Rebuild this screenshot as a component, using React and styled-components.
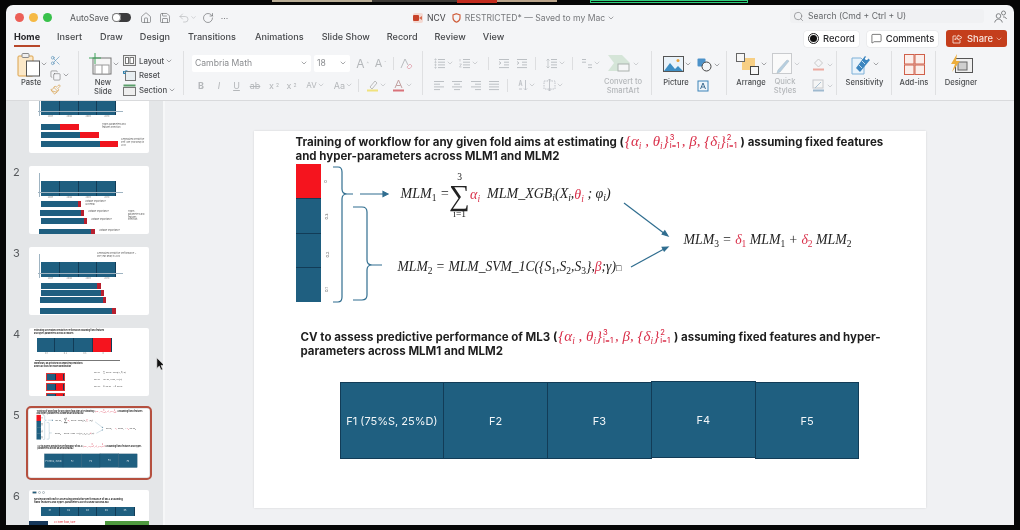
import React from 'react'
import styled, { createGlobalStyle } from 'styled-components'
import { ChevronDown, Copy, House, MessageSquare, Paintbrush, RotateCw, Save, Scissors, Search, Undo2 } from 'lucide-react'

const UI = `Inter, Roboto, "Liberation Sans", sans-serif`
const MATH = `"Liberation Serif", "DejaVu Serif", serif`
const BLUE = '#1f5f80'
const EDGE = '#123c57'
const RED = '#d9304a'
const MUTED = '#b4b7ba'
const TEXT = '#3c3c3e'

const GlobalStyle = createGlobalStyle`
  html, body { margin: 0; height: 100%; background: #050505; }
  #root { height: 530px; overflow: hidden; }
`

const Screen = styled.div`
  width: 1020px;
  height: 530px;
  background: #060606;
  font-family: ${UI};
  color: ${TEXT};
  filter: blur(0.45px);
`
const TopStrip = styled.div`
  height: 5px;
  display: flex;
  padding-left: 272px;
`
const StripPiece = styled.div`
  width: ${p => p.$w}px;
  height: ${p => p.$h || 2}px;
  margin-right: ${p => p.$gap || 0}px;
  background: ${p => p.$bg};
  border: ${p => p.$line || 'none'};
  box-sizing: border-box;
`
const Window = styled.div`
  margin: 0 6px;
  height: 520px;
  border-radius: 7px 7px 0 0;
  background: #f4f5f7;
  display: flex;
  flex-direction: column;
  overflow: hidden;
`

/* title bar */
const TitleBar = styled.div`
  height: 25px;
  flex: none;
  display: flex;
  align-items: center;
  font-size: 8.6px;
  color: #55575a;
  position: relative;
`
const Lights = styled.div`
  display: flex;
  gap: 5px;
  margin-left: 9px;
  width: 55px;
`
const Light = styled.span`
  width: 9px;
  height: 9px;
  border-radius: 50%;
  background: ${p => p.$c};
`
const Toggle = styled.span`
  width: 19px;
  height: 9px;
  margin: 0 9px 0 3px;
  border-radius: 5px;
  background: #3b3b3d;
  position: relative;
  &::after {
    content: '';
    position: absolute;
    left: 0;
    top: 0;
    width: 9px;
    height: 9px;
    border-radius: 50%;
    background: #fff;
    box-shadow: inset 0 0 0 1px #777;
  }
`
const QuickIcons = styled.div`
  display: flex;
  align-items: center;
  gap: 7px;
  color: #6a6c70;
`
const QuickPair = styled.span`
  display: flex;
  align-items: center;
  gap: 2px;
`
const DocTitle = styled.div`
  position: absolute;
  left: 407px;
  top: 0;
  height: 25px;
  display: flex;
  align-items: center;
  gap: 4px;
  font-size: 8.6px;
  color: #77797c;
`
const DocName = styled.span`
  color: #3f3f42;
  margin: 0 2px 0 0;
`
const SearchBox = styled.div`
  position: absolute;
  left: 784px;
  top: 4px;
  width: 194px;
  height: 14px;
  display: flex;
  align-items: center;
  gap: 4px;
  padding-left: 3px;
  box-sizing: border-box;
  font-size: 8.6px;
  background: #f0f1f3;
  border-radius: 3px;
  color: #66686b;
`
const People = styled.div`
  position: absolute;
  left: 988px;
  top: 5px;
`

/* tabs */
const TabBar = styled.div`
  height: 18px;
  flex: none;
  display: flex;
  align-items: flex-start;
  padding-left: 8px;
  position: relative;
`
const Tab = styled.div`
  font-size: 9.1px;
  line-height: 14px;
  height: 15px;
  margin-right: ${p => p.$gap}px;
  white-space: nowrap;
  font-weight: ${p => (p.$active ? 700 : 500)};
  color: ${p => (p.$active ? '#26262a' : '#47494c')};
  border-bottom: ${p => (p.$active ? '2px solid #b7472a' : '2px solid transparent')};
`
const TabActions = styled.div`
  position: absolute;
  right: 7px;
  top: 0;
  display: flex;
  align-items: center;
  gap: 8px;
`
const PillButton = styled.div`
  height: 16px;
  width: ${p => p.$w}px;
  box-sizing: border-box;
  display: flex;
  align-items: center;
  justify-content: center;
  gap: 4px;
  font-size: 9.4px;
  font-weight: 500;
  color: #29292c;
  background: #fff;
  border-radius: 3px;
  box-shadow: 0 0 0 0.5px #e2e3e5;
`
const ShareButton = styled(PillButton)`
  height: 17px;
  background: #c43e1c;
  color: #f8e4dd;
  box-shadow: none;
`
const RecordDot = styled.span`
  width: 11px;
  height: 11px;
  border: 1px solid #222;
  border-radius: 50%;
  box-sizing: border-box;
  display: grid;
  place-items: center;
  &::after {
    content: '';
    width: 7px;
    height: 7px;
    background: #111;
    border-radius: 50%;
  }
`

/* ribbon */
const Ribbon = styled.div`
  height: 53px;
  flex: none;
  display: flex;
  align-items: flex-start;
  border-bottom: 1px solid #d9dadc;
  box-sizing: border-box;
`
const Group = styled.div`
  width: ${p => p.$w}px;
  height: 44px;
  padding-left: ${p => p.$pad || 0}px;
  box-sizing: border-box;
  flex: none;
  display: flex;
  border-right: ${p => (p.$last ? 'none' : '1px solid #dfe0e2')};
  margin-top: 3px;
`
const BigButton = styled.div`
  width: ${p => p.$w}px;
  margin-left: ${p => p.$left || 0}px;
  display: flex;
  flex-direction: column;
  align-items: center;
  flex: none;
`
const BigIcon = styled.div`
  height: 24px;
  margin-top: 1px;
  display: flex;
  align-items: center;
  gap: 2px;
  color: #777;
`
const BigLabel = styled.div`
  font-size: 7.6px;
  line-height: 9px;
  margin-top: 2px;
  text-align: center;
  font-weight: 500;
  white-space: nowrap;
  color: ${p => (p.$off ? MUTED : '#4b4d50')};
`
const StackColumn = styled.div`
  display: flex;
  flex-direction: column;
  justify-content: space-between;
  height: ${p => p.$h || 42}px;
  margin: ${p => p.$top || 3}px 0 0 ${p => p.$left || 0}px;
  flex: none;
`
const StackItem = styled.div`
  display: flex;
  align-items: center;
  gap: 3px;
  font-size: 7.8px;
  font-weight: 500;
  color: #4b4d50;
  height: 13px;
  white-space: nowrap;
`
const Rows = styled.div`
  width: ${p => p.$w}px;
  flex: none;
  display: flex;
  flex-direction: column;
  gap: 6px;
  padding-top: 4px;
`
const Row = styled.div`
  display: flex;
  align-items: center;
  height: 16px;
  color: ${MUTED};
`
const Field = styled.div`
  width: ${p => p.$w}px;
  height: 17px;
  margin-right: 3px;
  padding: 0 5px 0 3px;
  box-sizing: border-box;
  display: flex;
  align-items: center;
  justify-content: space-between;
  background: #fff;
  border-radius: 2px;
  font-size: 8.6px;
  color: #8a8c8f;
`
const Cell = styled.div`
  width: ${p => p.$w}px;
  flex: none;
  display: flex;
  align-items: center;
  justify-content: center;
  gap: 2px;
  font-size: ${p => p.$size || 9}px;
  font-weight: ${p => p.$weight || 400};
  font-style: ${p => (p.$italic ? 'italic' : 'normal')};
  text-decoration: ${p => p.$deco || 'none'};
  color: ${MUTED};
`
const RowRule = styled.span`
  width: 1px;
  height: 13px;
  margin: 0 ${p => p.$r ?? p.$gap ?? 4}px 0 ${p => p.$gap ?? 4}px;
  background: #dddee0;
  flex: none;
`
const Script = styled.span`
  font-size: 5px;
  vertical-align: ${p => p.$dir};
`
const TightChevron = styled(ChevronDown)`
  margin: 0 -2px;
  flex: none;
`

const Chev = ({ c = '#6d6f72', s = 8 }) => <TightChevron size={s} color={c} strokeWidth={1.8} />

const Lines = ({ kind = 'left', w = 12 }) => {
  const rows = {
    left: [[1, 11], [1, 7], [1, 11], [1, 7]],
    center: [[1, 11], [3, 9], [1, 11], [3, 9]],
    right: [[1, 11], [5, 11], [1, 11], [5, 11]],
    justify: [[1, 11], [1, 11], [1, 11], [1, 11]],
    bullets: [[4, 11], [4, 11], [4, 11], [4, 11]],
    numbers: [[4, 11], [4, 11], [4, 11], [4, 11]],
    spacing: [[5, 11], [5, 11], [5, 11], [5, 11]],
    indent: [[1, 11], [6, 11], [6, 11], [1, 11]],
    columns: [[1, 5], [1, 5], [7, 11], [7, 11]],
  }[kind]
  return (
    <svg width={w} height="11" viewBox="0 0 12 11" fill="none" stroke="#bcc0c4" strokeWidth="1">
      {rows.map((r, i) => <line key={i} x1={r[0]} x2={r[1]} y1={1.5 + i * 2.7} y2={1.5 + i * 2.7} />)}
      {kind === 'bullets' && [1.5, 4.2, 6.9, 9.6].map(y => <circle key={y} cx="1.5" cy={y} r=".6" />)}
      {kind === 'numbers' && <path d="M1 1v2.500M.5 6h2L.5 9h2" strokeWidth=".7" />}
      {kind === 'spacing' && <path d="M2 1v9M.5 2.500L2 1l1.500 1.500M.5 8.500L2 10l1.500-1.500" strokeWidth=".8" />}
      {kind === 'indent' && <path d="M1 3.500l2 1.500-2 1.500" />}
    </svg>
  )
}

const TextDirIcon = () => (
  <svg width="10" height="12" viewBox="0 0 10 12" fill="none" stroke="#bcc0c4" strokeWidth=".9">
    <path d="M1 7l1.500-6L4 7M1.500 5h2" />
    <path d="M7.500 1v10M6 9.500L7.500 11 9 9.500" />
    <path d="M1 10h3" />
  </svg>
)
const TextBoxAlignIcon = () => (
  <svg width="13" height="12" viewBox="0 0 13 12" fill="none" stroke="#bcc0c4" strokeWidth=".9">
    <rect x="1" y="2" width="11" height="8" strokeDasharray="1.500 1" />
    <path d="M6.500 0v12M5 1.500L6.500 0 8 1.500M5 10.500L6.500 12 8 10.500" />
  </svg>
)

/* ribbon drawings */
const PasteIcon = () => (
  <svg width="23" height="25" viewBox="0 0 23 25" fill="none">
    <rect x="1" y="4" width="15" height="20" rx="1" fill="#fbe8c8" stroke="#dca24a" />
    <rect x="5" y="1.500" width="7" height="4" rx="1" fill="#eee" stroke="#8a8a8a" />
    <rect x="9.500" y="9" width="13" height="15" fill="#fff" stroke="#555" />
  </svg>
)
const NewSlideIcon = () => (
  <svg width="23" height="24" viewBox="0 0 23 24" fill="none">
    <rect x="4" y="6" width="18" height="16" fill="#f6f6f6" stroke="#767676" />
    <rect x="6" y="13" width="14" height="9" fill="#fff" stroke="#999" />
    <line x1="13" y1="13" x2="13" y2="22" stroke="#999" />
    <path d="M6 1v11M0 6h12" stroke="#3fa45b" strokeWidth="1" />
  </svg>
)
const LayoutIcon = () => (
  <svg width="13" height="11" viewBox="0 0 13 11" fill="none" stroke="#777">
    <rect x=".5" y=".5" width="12" height="10" fill="#eee" />
    <rect x="2.500" y="2.500" width="3" height="6" fill="#fff" />
    <rect x="7" y="2.500" width="3.500" height="6" fill="#fff" />
  </svg>
)
const ResetIcon = () => (
  <svg width="13" height="11" viewBox="0 0 13 11" fill="none">
    <rect x="2.500" y="1.500" width="10" height="9" fill="#e8eef1" stroke="#777" />
    <path d="M.5 3.500a3 3 0 0 1 4-2.500M.5 1v2.500H3" stroke="#2f81ad" />
  </svg>
)
const SectionIcon = () => (
  <svg width="13" height="12" viewBox="0 0 13 12" fill="none">
    <rect x=".5" y="3.500" width="12" height="8" fill="#eee" stroke="#777" />
    <rect x=".5" y=".5" width="12" height="2" fill="#5a9e6a" />
  </svg>
)
const FontColorIcon = () => (
  <svg width="13" height="13" viewBox="0 0 13 13" fill="none">
    <path d="M3 9l3.500-8L10 9M4.300 6.500h4.400" stroke="#c2a0a0" />
    <rect x="1" y="10.500" width="11" height="2" fill="#d9727a" />
  </svg>
)
const HighlightIcon = () => (
  <svg width="13" height="13" viewBox="0 0 13 13" fill="none">
    <path d="M4 8l5-6 2 2-5 6z" stroke="#bcbcbc" />
    <rect x="1" y="10.500" width="11" height="2" fill="#f0e27d" />
  </svg>
)
const ClearFormatIcon = () => (
  <svg width="13" height="13" viewBox="0 0 13 13" fill="none">
    <path d="M1 11l4-9 3 6" stroke="#b9bcbf" />
    <path d="M7 10l3-3 2 2-2 2.500H8z" stroke="#e5b3bd" />
  </svg>
)
const SmartArtIcon = () => (
  <svg width="24" height="17" viewBox="0 0 24 17" fill="none">
    <path d="M0 0h14l8 8-8 8H0l6-8z" fill="#d5e5d8" />
    <rect x="10" y="9" width="11" height="7" fill="#f5f6f7" stroke="#aab2ad" />
  </svg>
)
const PictureIcon = () => (
  <svg width="21" height="16" viewBox="0 0 21 16" fill="none">
    <rect x=".5" y=".5" width="20" height="15" fill="#eaf3fa" stroke="#555" />
    <path d="M1 15l6-8 5 6 3-3 5 5z" fill="#3f8fc4" />
    <circle cx="15" cy="4.500" r="1.500" fill="#e9a13b" />
  </svg>
)
const ShapesIcon = () => (
  <svg width="15" height="14" viewBox="0 0 15 14" fill="none">
    <rect x=".5" y=".5" width="8" height="8" rx="1" fill="#4c92c9" />
    <circle cx="9.500" cy="8.500" r="4.500" fill="#f4f5f7" stroke="#444" />
  </svg>
)
const TextBoxIcon = () => (
  <svg width="12" height="12" viewBox="0 0 12 12" fill="none">
    <rect x="1" y="1" width="10" height="10" fill="#eef5fb" stroke="#3d83b8" />
    <path d="M3.500 9L6 3l2.500 6M4.400 7h3.200" stroke="#2c5f86" strokeWidth=".9" />
  </svg>
)
const ArrangeIcon = () => (
  <svg width="24" height="22" viewBox="0 0 24 22" fill="none">
    <rect x="6" y="5" width="13" height="12" fill="#f7cf84" />
    <rect x=".5" y=".5" width="8" height="8" fill="#f7f7f7" stroke="#666" />
    <rect x="14.500" y="13.500" width="8" height="8" fill="#f7f7f7" stroke="#444" />
  </svg>
)
const QuickStylesIcon = () => (
  <svg width="21" height="21" viewBox="0 0 21 21" fill="none">
    <rect x=".5" y=".5" width="19" height="20" fill="#fafafa" stroke="#c9cbce" />
    <path d="M5 20l3-1 9-11-2-1-9 10z" fill="#b7cfe0" stroke="#aebfca" strokeWidth=".6" />
  </svg>
)
const ShapeFillIcon = () => (
  <svg width="13" height="13" viewBox="0 0 13 13" fill="none">
    <path d="M6.500 1l4 4-4 4-4-4z" stroke="#c9c9c9" />
    <rect x="1" y="10.500" width="11" height="2" fill="#eca9a0" />
  </svg>
)
const ShapeLineIcon = () => (
  <svg width="13" height="13" viewBox="0 0 13 13" fill="none">
    <rect x="1" y="1" width="10" height="8" fill="#f5f5f5" stroke="#c6c8cb" />
    <path d="M3 9l6-6" stroke="#a9bfd0" />
    <rect x="1" y="10.500" width="11" height="2" fill="#9eb9cf" />
  </svg>
)
const SensitivityIcon = () => (
  <svg width="21" height="21" viewBox="0 0 21 21" fill="none">
    <path d="M1 4h9l3 3v13H1z" fill="#e9f3fb" stroke="#7eb1d8" />
    <path d="M5 14L14 2l5 4-10 12z" fill="#3d86bf" />
    <circle cx="15.500" cy="4.500" r="1.500" fill="#fff" />
    <path d="M8 11l3 3M11 7l3 3" stroke="#cfe3f2" strokeWidth=".9" />
  </svg>
)
const AddInsIcon = () => (
  <svg width="21" height="21" viewBox="0 0 21 21" fill="#fbeeea" stroke="#d0604a">
    <rect x=".5" y=".5" width="9.500" height="9.500" />
    <rect x="11" y=".5" width="9.500" height="9.500" />
    <rect x=".5" y="11" width="9.500" height="9.500" />
    <rect x="11" y="11" width="9.500" height="9.500" />
  </svg>
)
const DesignerIcon = () => (
  <svg width="23" height="20" viewBox="0 0 23 20" fill="none">
    <rect x="5.500" y="4.500" width="17" height="14" fill="#efefef" stroke="#555" />
    <rect x="8" y="8" width="9" height="8" fill="#cfcfcf" stroke="#666" />
    <path d="M7 0L1 10h4l-3 8 8-11H6z" fill="#ecae3d" />
  </svg>
)
const PptBadge = () => (
  <svg width="10" height="10" viewBox="0 0 10 10">
    <rect x="0" y="0" width="10" height="10" rx="2" fill="#f3d9d2" />
    <rect x="0" y="2" width="6" height="6" rx="1" fill="#c8432a" />
    <path d="M6 5l3-2v4z" fill="#d76a4e" />
  </svg>
)
const ShieldIcon = () => (
  <svg width="9" height="10" viewBox="0 0 9 10" fill="none">
    <path d="M4.500.7L8 2v3c0 2-1.500 3.400-3.500 4.200C2.500 8.400 1 7 1 5V2z" stroke="#d0613f" strokeWidth="1.200" />
  </svg>
)
const PeopleIcon = () => (
  <svg width="13" height="13" viewBox="0 0 13 13" fill="none" stroke="#77797c" strokeWidth=".9">
    <circle cx="4.500" cy="6" r="2.300" />
    <path d="M.7 12.500c.4-2.300 2-3.300 3.800-3.300s3.400 1 3.800 3.300" />
    <circle cx="9.500" cy="3" r="2" />
    <path d="M9 7c1.500-.3 3 .4 3.500 2" />
  </svg>
)
const ShareGlyph = () => (
  <svg width="11" height="10" viewBox="0 0 11 10" fill="none" stroke="#f6d9cf" strokeWidth=".9">
    <path d="M8 6v3H1V2h3" />
    <path d="M6 1l4 2.500L6 6V4.500C4.500 4.500 3.500 5 3 6c0-2 1-3 3-3.200z" />
  </svg>
)
const CursorIcon = () => (
  <svg width="9" height="14" viewBox="0 0 9 14">
    <path d="M.8.8v10.600l2.500-2.300 1.700 4 1.700-.7-1.700-4h3.300z" fill="#111" stroke="#eee" strokeWidth=".6" />
  </svg>
)

/* body */
const Body = styled.div`
  flex: 1;
  display: flex;
  min-height: 0;
`
const Panel = styled.div`
  width: 157px;
  flex: none;
  background: #e4e6e8;
  border-right: 2px solid #f6f7f8;
  overflow: hidden;
  position: relative;
`
const ThumbList = styled.div`
  display: flex;
  flex-direction: column;
  gap: 13px;
  margin-top: -16px;
`
const ThumbRow = styled.div`
  display: flex;
  height: 68px;
  flex: none;
`
const ThumbNumber = styled.div`
  width: 23px;
  flex: none;
  padding: 0 0 0 7px;
  box-sizing: border-box;
  font-size: 11px;
  line-height: 12px;
  color: #55585b;
`
const Thumb = styled.div`
  width: 120px;
  height: 68px;
  flex: none;
  background: #fff;
  border-radius: 2px;
  box-sizing: border-box;
  padding-top: ${p => p.$top || 0}px;
  overflow: ${p => (p.$selected ? 'visible' : 'hidden')};
  position: relative;
  outline: ${p => (p.$selected ? '2.5px solid #b5503f' : 'none')};
  outline-offset: 1.5px;
`
const Timeline = styled.div`
  display: flex;
  width: 75px;
  height: 14.5px;
  margin-left: 12px;
  background: ${BLUE};
  position: relative;
  &::before {
    content: '';
    position: absolute;
    left: -2px;
    top: -8px;
    width: 0.6px;
    height: 24px;
    background: #9fb4c2;
  }
  &::after {
    content: '';
    position: absolute;
    left: -3px;
    top: 11px;
    width: 85px;
    height: 0.6px;
    background: #9fb4c2;
    z-index: 0;
  }
`
const TimeCell = styled.div`
  flex: 1;
  border-right: 0.5px solid ${EDGE};
`
const Ticks = styled.div`
  display: flex;
  justify-content: space-around;
  width: 75px;
  margin-left: ${p => p.$left || 12}px;
  font-size: 2.2px;
  line-height: 4px;
  color: #777;
`
const BarRow = styled.div`
  display: flex;
  align-items: center;
  margin-top: ${p => p.$gap}px;
  height: 6px;
  margin-left: ${p => p.$x}px;
`
const BarBlue = styled.div`
  height: 6px;
  width: ${p => p.$w}px;
  background: ${BLUE};
`
const BarRed = styled.div`
  height: 6px;
  width: ${p => p.$w}px;
  background: ${p => (p.$dark ? '#b8202e' : '#f0141e')};
`
const BarNote = styled.span`
  font-size: 2.2px;
  line-height: 2.8px;
  color: #555;
  margin-left: ${p => p.$gap || 4}px;
  width: 28px;
`
const CornerNote = styled.span`
  position: absolute;
  left: ${p => p.$x}px;
  top: ${p => p.$y}px;
  width: ${p => p.$w}px;
  font-size: 2.2px;
  line-height: 2.8px;
  color: #555;
`
const ThumbLine = styled.div`
  font-size: ${p => p.$size || 2.5}px;
  line-height: ${p => p.$lh || 3}px;
  font-weight: ${p => p.$weight || 700};
  color: #222;
  margin-left: ${p => p.$left || 5}px;
  white-space: nowrap;
`
const FoldBar = styled.div`
  display: flex;
  height: 14px;
  width: 75.5px;
  margin: 3px 0 0 7.5px;
  background: ${BLUE};
`
const FoldPart = styled.div`
  flex: 1;
  background: ${p => (p.$red ? '#f5141e' : BLUE)};
  border-right: 0.5px solid ${EDGE};
`
const Divider = styled.div`
  height: 0.7px;
  width: 85px;
  margin: 4px 0 1.5px 6px;
  background: #777;
`
const MiniSplit = styled.div`
  display: flex;
  margin-top: 2px;
`
const MiniGrid = styled.div`
  margin-left: 17px;
  width: 19px;
  display: flex;
  flex-direction: column;
  gap: 2.5px;
  margin-top: 3px;
`
const MiniRow = styled.div`
  display: flex;
  height: 5.5px;
  border: 0.5px solid #d33;
`
const MiniCol = styled.div`
  margin-left: 29px;
  display: flex;
  flex-direction: column;
  gap: 4px;
  margin-top: 1px;
`
const MiniText = styled.div`
  font-family: ${MATH};
  font-style: italic;
  font-size: 2.5px;
  line-height: 3px;
  color: #333;
  white-space: nowrap;
`
const Pills = styled.div`
  display: flex;
  gap: 1px;
  margin: 0 0 4px 3px;
`
const Pill = styled.span`
  width: ${p => p.$w}px;
  height: 3px;
  border-radius: 1.5px;
  background: ${p => p.$c};
  border: 0.5px solid #aab4bb;
  box-sizing: border-box;
`
const Cells5 = styled.div`
  display: flex;
  margin: 3px 0 0 12px;
  width: 94px;
  height: 9px;
`
const Cell5 = styled.div`
  flex: 1;
  background: ${BLUE};
  border-right: 0.5px solid ${EDGE};
  color: #fff;
  font-size: 2.2px;
  line-height: 3px;
  text-align: center;
  padding-top: 1.5px;
  box-sizing: border-box;
`
const BottomBand = styled.div`
  display: flex;
  margin-top: 5px;
  height: 8px;
`
const NavyBlock = styled.div`
  width: 19px;
  background: #16375a;
`
const RedNote = styled.div`
  width: 50px;
  margin-left: 6px;
  font-size: 2.3px;
  line-height: 3px;
  color: #e0212d;
`
const GreenBlock = styled.div`
  width: 44px;
  margin-left: 1px;
  background: #4f9a3f;
`
const ScaledSlide = styled.div`
  position: absolute;
  left: 0;
  top: 0;
  width: 672px;
  height: 377px;
  transform: scale(0.1786);
  transform-origin: 0 0;
`
const Pointer = styled.div`
  position: absolute;
  left: 150px;
  top: 254px;
`

const Canvas = styled.div`
  flex: 1;
  background: #f0f1f3;
  display: flex;
  justify-content: center;
  padding-top: 30px;
`
const Slide = styled.div`
  width: 672px;
  height: 377px;
  flex: none;
  background: #fff;
  box-shadow: 0 0 2px rgba(0, 0, 0, 0.12);
`
const SlideBox = styled.div`
  width: 672px;
  height: 377px;
  padding-top: 3px;
  box-sizing: border-box;
  background: #fff;
`
const Heading = styled.div`
  margin-left: ${p => p.$left}px;
  margin-top: ${p => p.$top || 0}px;
  font-family: ${UI};
  font-weight: 700;
  font-size: 11.5px;
  line-height: 15px;
  color: #1e1e1e;
`
const HeadLine = styled.div`
  height: 15px;
  white-space: nowrap;
`
const MathRun = styled.span`
  font-family: ${MATH};
  font-style: italic;
  font-weight: 400;
  color: ${RED};
  font-size: 15px;
  margin: 0 1px;
`
const Limits = styled.span`
  display: inline-flex;
  flex-direction: column;
  height: ${p => (p.$mini ? 22 : 15)}px;
  margin-top: ${p => (p.$mini ? -3 : 0)}px;
  vertical-align: top;
  font-size: ${p => (p.$mini ? 9.5 : 7.5)}px;
  line-height: ${p => (p.$mini ? 11 : 7.5)}px;
  font-weight: 500;
  margin-right: 1px;
`
const Diagram = styled.div`
  position: relative;
  height: 161px;
`
const FoldStack = styled.div`
  position: absolute;
  left: 42px;
  top: 0;
  width: 25px;
  height: 138px;
  display: flex;
  flex-direction: column;
`
const FoldCell = styled.div`
  flex: 1;
  background: ${p => (p.$red ? '#f5141e' : BLUE)};
  border-top: ${p => (p.$red ? 'none' : `0.5px solid ${EDGE}`)};
`
const FoldTag = styled.span`
  position: absolute;
  left: 70px;
  top: ${p => p.$y}px;
  font-size: ${p => (p.$mini ? 9.5 : 4)}px;
  line-height: 5px;
  color: #666;
  transform: rotate(-90deg);
`
const DiagramLines = styled.svg`
  position: absolute;
  left: 0;
  top: 0;
`
const Formula = styled.div`
  position: absolute;
  left: ${p => p.$x}px;
  top: ${p => p.$y}px;
  transform: translateY(-50%);
  font-family: ${MATH};
  font-style: italic;
  font-size: ${p => p.$size || 14}px;
  color: #222;
  white-space: pre;
`
const Sub = styled.sub`
  font-size: 9.5px;
  line-height: 0;
  vertical-align: -3px;
  font-style: ${p => (p.$upright ? 'normal' : 'italic')};
`
const Red = styled.span`
  color: ${RED};
`
const Box = styled.span`
  font-size: 9px;
  font-style: normal;
`
const Sum = styled.span`
  display: inline-flex;
  flex-direction: column;
  align-items: center;
  vertical-align: middle;
  margin: 0;
  font-size: 9.5px;
  font-style: normal;
  line-height: 10px;
`
const SumSign = styled.span`
  font-size: 29px;
  line-height: 27px;
`
const FoldRow = styled.div`
  display: flex;
  width: 519px;
  height: 77px;
  margin: 23px 0 0 87px;
`
const Fold = styled.div`
  flex: 1;
  display: flex;
  align-items: center;
  justify-content: center;
  background: ${BLUE};
  color: #f2f6f8;
  font-size: 11px;
  border: 1px solid ${EDGE};
  margin-left: -1px;
  transform: translateY(${p => p.$shift || 0}px);
`

const MLMSub = ({ n }) => <>MLM<Sub $upright>{n}</Sub></>

const SlideBody = ({ mini }) => (
  <SlideBox>
    <Heading $left={42}>
      <HeadLine>
        Training of workflow for any given fold aims at estimating (
        <MathRun>{'{α'}<Sub>i</Sub>{' , θ'}<Sub>i</Sub>{'}'}</MathRun>
        <Limits $mini={mini}><Red>3</Red><Red>i=1</Red></Limits>
        <MathRun>, β, {'{δ'}<Sub>i</Sub>{'}'}</MathRun>
        <Limits $mini={mini}><Red>2</Red><Red>i=1</Red></Limits>
        {' ) assuming fixed features'}
      </HeadLine>
      <HeadLine>and hyper-parameters across MLM1 and MLM2</HeadLine>
    </Heading>
    <Diagram>
      <FoldStack>
        <FoldCell $red />
        <FoldCell />
        <FoldCell />
        <FoldCell />
      </FoldStack>
      <FoldTag $mini={mini} $y={15}>0</FoldTag>
      <FoldTag $mini={mini} $y={50}>0.3</FoldTag>
      <FoldTag $mini={mini} $y={88}>0.2</FoldTag>
      <FoldTag $mini={mini} $y={123}>0.1</FoldTag>
      <DiagramLines width="672" height="161" viewBox="0 0 672 161" fill="none" stroke="#2f6d8f" strokeWidth="1.2">
        <path d="M79 3H84Q88 3 88 8V25Q88 30 93 30H99M93 30Q88 30 88 35V133Q88 138 84 138H79" />
        <path d="M99 43H108Q113 43 113 48V96Q113 101 118 101H128M118 101Q113 101 113 106V131Q113 136 108 136H99" />
        <path d="M106 30H133" />
        <path d="M134 30l-5-2.500v5z" fill="#2f6d8f" />
        <path d="M370 39L411 70" />
        <path d="M414 72l-3.200-5.200-2.600 3.400z" fill="#2f6d8f" />
        <path d="M377 103L410 85" />
        <path d="M414 83l-5.800.300 2 3.700z" fill="#2f6d8f" />
      </DiagramLines>
      <Formula $x={147} $y={31}>
        <MLMSub n="1" />{' ='}
        <Sum>3<SumSign>∑</SumSign>i=1</Sum>
        <Red>α<Sub>i</Sub></Red>{'  MLM_XGB'}<Sub>i</Sub>{'(X'}<Sub>i</Sub>{','}
        <Red>θ<Sub>i</Sub></Red>{' ; φ'}<Sub>i</Sub>{')'}
      </Formula>
      <Formula $x={144} $y={103} $size={13.6}>
        <MLMSub n="2" />{' = MLM_SVM_1C({S'}<Sub $upright>1</Sub>{',S'}<Sub $upright>2</Sub>{',S'}<Sub $upright>3</Sub>{'},'}
        <Red>β</Red>{';γ)'}<Box>□</Box>
      </Formula>
      <Formula $x={430} $y={76} $size={13.8}>
        <MLMSub n="3" />{' = '}<Red>δ<Sub $upright>1</Sub></Red>{' MLM'}<Sub $upright>1</Sub>{' + '}<Red>δ<Sub $upright>2</Sub></Red>{' MLM'}<Sub $upright>2</Sub>
      </Formula>
    </Diagram>
    <Heading $left={47} $top={4}>
      <HeadLine>
        CV to assess predictive performance of ML3 (
        <MathRun>{'{α'}<Sub>i</Sub>{' , θ'}<Sub>i</Sub>{'}'}</MathRun>
        <Limits $mini={mini}><Red>3</Red><Red>i=1</Red></Limits>
        <MathRun>, β, {'{δ'}<Sub>i</Sub>{'}'}</MathRun>
        <Limits $mini={mini}><Red>2</Red><Red>i=1</Red></Limits>
        {' ) assuming fixed features and hyper-'}
      </HeadLine>
      <HeadLine>parameters across MLM1 and MLM2</HeadLine>
    </Heading>
    <FoldRow>
      <Fold>F1 (75%S, 25%D)</Fold>
      <Fold>F2</Fold>
      <Fold>F3</Fold>
      <Fold $shift={-1}>F4</Fold>
      <Fold>F5</Fold>
    </FoldRow>
  </SlideBox>
)

const TimeBlock = () => (
  <>
    <Timeline><TimeCell /><TimeCell /><TimeCell /><TimeCell /></Timeline>
    <Ticks><span>2007</span><span>2008</span><span>2009</span><span>2010</span></Ticks>
  </>
)

const Bar = ({ gap, x = 12, blue, red, dark, note, noteGap }) => (
  <BarRow $gap={gap} $x={x}>
    <BarBlue $w={blue} />
    <BarRed $w={red} $dark={dark} />
    {note && <BarNote $gap={noteGap}>{note}</BarNote>}
  </BarRow>
)

const tabs = [
  ['Home', 17], ['Insert', 18], ['Draw', 17], ['Design', 18], ['Transitions', 19], ['Animations', 18],
  ['Slide Show', 17], ['Record', 17], ['Review', 17], ['View', 0],
]

const App = () => (
  <>
    <GlobalStyle />
    <Screen>
      <TopStrip>
        <StripPiece $w={100} $bg="#b9ad96" />
        <StripPiece $w={85} $bg="#3d3a36" />
        <StripPiece $w={40} $h={3} $bg="#c22b1d" />
        <StripPiece $w={60} $h={2} $bg="#b9a38a" $gap={33} />
        <StripPiece $w={158} $h={3} $bg="transparent" $line="1px solid #2fce7c" />
      </TopStrip>
      <Window>
        <TitleBar>
          <Lights>
            <Light $c="#ec5f57" />
            <Light $c="#f5b945" />
            <Light $c="#38c14b" />
          </Lights>
          <span>AutoSave</span>
          <Toggle />
          <QuickIcons>
            <House size={12} strokeWidth={1.3} />
            <Save size={12} strokeWidth={1.3} />
            <QuickPair>
              <Undo2 size={12} strokeWidth={1.3} color="#b5b7ba" />
              <Chev c="#b5b7ba" s={7} />
            </QuickPair>
            <RotateCw size={12} strokeWidth={1.3} />
            <span>···</span>
          </QuickIcons>
          <DocTitle>
            <PptBadge />
            <DocName>NCV</DocName>
            <ShieldIcon />
            <span>RESTRICTED* — Saved to my Mac</span>
            <Chev s={8} />
          </DocTitle>
          <SearchBox>
            <Search size={11} color="#77797c" strokeWidth={1.4} />
            Search (Cmd + Ctrl + U)
          </SearchBox>
          <People><PeopleIcon /></People>
        </TitleBar>
        <TabBar>
          {tabs.map(([name, gap], i) => <Tab key={name} $gap={gap} $active={i === 0}>{name}</Tab>)}
          <TabActions>
            <PillButton $w={55}><RecordDot />Record</PillButton>
            <PillButton $w={71}><MessageSquare size={11} color="#222" strokeWidth={1.3} />Comments</PillButton>
            <ShareButton $w={61}><ShareGlyph />Share<Chev c="#f6d9cf" /></ShareButton>
          </TabActions>
        </TabBar>
        <Ribbon>
          <Group $w={73} $pad={11}>
            <BigButton $w={28}>
              <BigIcon><PasteIcon /><Chev /></BigIcon>
              <BigLabel>Paste</BigLabel>
            </BigButton>
            <StackColumn $left={5}>
              <StackItem><Scissors size={11} color="#4d8ab5" strokeWidth={1.3} /></StackItem>
              <StackItem><Copy size={11} color="#666" strokeWidth={1.2} /><Chev /></StackItem>
              <StackItem><Paintbrush size={11} color="#d69a3c" strokeWidth={1.4} /></StackItem>
            </StackColumn>
          </Group>
          <Group $w={105} $pad={9}>
            <BigButton $w={30}>
              <BigIcon><NewSlideIcon /><Chev /></BigIcon>
              <BigLabel>New<br />Slide</BigLabel>
            </BigButton>
            <StackColumn $left={5}>
              <StackItem><LayoutIcon />Layout<Chev /></StackItem>
              <StackItem><ResetIcon />Reset</StackItem>
              <StackItem><SectionIcon />Section<Chev /></StackItem>
            </StackColumn>
          </Group>
          <Group $w={239} $pad={8}>
            <Rows $w={225}>
              <Row>
                <Field $w={119}>Cambria Math<Chev /></Field>
                <Field $w={36}>18<Chev /></Field>
                <Cell $w={19} $size={12}>A<Script $dir="super">^</Script></Cell>
                <Cell $w={17} $size={11}>A<Script $dir="super">ˇ</Script></Cell>
                <RowRule $gap={4} />
                <Cell $w={16}><ClearFormatIcon /></Cell>
              </Row>
              <Row>
                <Cell $w={18} $weight={700}>B</Cell>
                <Cell $w={18} $italic>I</Cell>
                <Cell $w={17} $deco="underline">U</Cell>
                <Cell $w={20} $deco="line-through">ab</Cell>
                <Cell $w={18}>x<Script $dir="super">2</Script></Cell>
                <Cell $w={17}>x<Script $dir="sub">2</Script></Cell>
                <Cell $w={29} $size={8}>AV<Chev c={MUTED} /></Cell>
                <Cell $w={27}>Aa<Chev c={MUTED} /></Cell>
                <RowRule $gap={2} />
                <Cell $w={29}><HighlightIcon /><Chev c={MUTED} /></Cell>
                <Cell $w={22}><FontColorIcon /><Chev c={MUTED} /></Cell>
              </Row>
            </Rows>
          </Group>
          <Group $w={229} $pad={8}>
            <Rows $w={172}>
              <Row>
                <Cell $w={24}><Lines kind="bullets" /><Chev c={MUTED} /></Cell>
                <Cell $w={26}><Lines kind="numbers" /><Chev c={MUTED} /></Cell>
                <RowRule $gap={7} />
                <Cell $w={15}><Lines kind="indent" /></Cell>
                <Cell $w={21}><Lines kind="indent" /></Cell>
                <RowRule $gap={3} />
                <Cell $w={32}><Lines kind="spacing" /><Chev c={MUTED} /></Cell>
                <RowRule $gap={1} $r={3} />
                <Cell $w={27}><Lines kind="columns" /><Chev c={MUTED} /></Cell>
              </Row>
              <Row>
                <Cell $w={16}><Lines kind="left" /></Cell>
                <Cell $w={20}><Lines kind="center" /></Cell>
                <Cell $w={17}><Lines kind="right" /></Cell>
                <Cell $w={19}><Lines kind="justify" /></Cell>
                <RowRule $gap={4} />
                <Cell $w={27}><TextDirIcon /><Chev c={MUTED} /></Cell>
                <Cell $w={27}><TextBoxAlignIcon /><Chev c={MUTED} /></Cell>
              </Row>
            </Rows>
            <BigButton $w={40}>
              <BigIcon><SmartArtIcon /><Chev c={MUTED} /></BigIcon>
              <BigLabel $off>Convert to<br />SmartArt</BigLabel>
            </BigButton>
          </Group>
          <Group $w={75} $pad={6}>
            <BigButton $w={36}>
              <BigIcon><PictureIcon /><Chev /></BigIcon>
              <BigLabel>Picture</BigLabel>
            </BigButton>
            <StackColumn $left={3} $top={7} $h={34}>
              <StackItem><ShapesIcon /><Chev /></StackItem>
              <StackItem><TextBoxIcon /></StackItem>
            </StackColumn>
          </Group>
          <Group $w={110} $pad={9}>
            <BigButton $w={30}>
              <BigIcon><ArrangeIcon /><Chev /></BigIcon>
              <BigLabel>Arrange</BigLabel>
            </BigButton>
            <BigButton $w={34} $left={2}>
              <BigIcon><QuickStylesIcon /><Chev c={MUTED} /></BigIcon>
              <BigLabel $off>Quick<br />Styles</BigLabel>
            </BigButton>
            <StackColumn $left={10} $top={7} $h={34}>
              <StackItem><ShapeFillIcon /><Chev c={MUTED} /></StackItem>
              <StackItem><ShapeLineIcon /><Chev c={MUTED} /></StackItem>
            </StackColumn>
          </Group>
          <Group $w={55}>
            <BigButton $w={55}>
              <BigIcon><SensitivityIcon /><Chev /></BigIcon>
              <BigLabel>Sensitivity</BigLabel>
            </BigButton>
          </Group>
          <Group $w={44}>
            <BigButton $w={44}>
              <BigIcon><AddInsIcon /></BigIcon>
              <BigLabel>Add-ins</BigLabel>
            </BigButton>
          </Group>
          <Group $w={50} $last>
            <BigButton $w={50}>
              <BigIcon><DesignerIcon /></BigIcon>
              <BigLabel>Designer</BigLabel>
            </BigButton>
          </Group>
        </Ribbon>
        <Body>
          <Panel>
            <ThumbList>
              <ThumbRow>
                <ThumbNumber />
                <Thumb $top={15}>
                  <TimeBlock />
                  <Bar gap={5} blue={19} red={19} note="Hyper-parameters and features selection" noteGap={23} />
                  <Bar gap={2} blue={39} red={19} />
                  <Bar gap={3} blue={59} red={18} note="Generalized Predictive Perf. one year delay in 2013" noteGap={3} />
                </Thumb>
              </ThumbRow>
              <ThumbRow>
                <ThumbNumber>2</ThumbNumber>
                <Thumb $top={15}>
                  <TimeBlock />
                  <Bar gap={1} blue={37} red={3} dark note="Variable Importance (Schema)" />
                  <Bar gap={3} x={11} blue={41} red={3} dark note="Variable Importance" />
                  <Bar gap={2} blue={43} red={3} dark note="Variable Importance" />
                  <Bar gap={5} x={10} blue={52} red={4} dark note="Variable Importance" />
                  <CornerNote $x={99} $y={45} $w={18}>Hyper-parameters and features selection</CornerNote>
                </Thumb>
              </ThumbRow>
              <ThumbRow>
                <ThumbNumber>3</ThumbNumber>
                <Thumb $top={15}>
                  <TimeBlock />
                  <Bar gap={2} blue={56} red={4} dark />
                  <Bar gap={1} blue={60} red={3} dark />
                  <Bar gap={1} x={11} blue={63} red={3} dark />
                  <Bar gap={5} x={11} blue={72} red={4} dark />
                  <CornerNote $x={68} $y={6} $w={42}>Generalized Predictive Performance – one year delay in 2013</CornerNote>
                </Thumb>
              </ThumbRow>
              <ThumbRow>
                <ThumbNumber>4</ThumbNumber>
                <Thumb $top={1}>
                  <ThumbLine $size={2}>Estimating Generalized Predictive Performance assuming fixed features</ThumbLine>
                  <ThumbLine $size={2}>and hyper-parameters across all models</ThumbLine>
                  <FoldBar><FoldPart /><FoldPart /><FoldPart /><FoldPart $red /></FoldBar>
                  <Ticks $left={8}><span>0.1</span><span>0.2</span><span>0.3</span><span>0</span></Ticks>
                  <Divider />
                  <ThumbLine $size={2}>Workflows: MLM trained on deposited predictions</ThumbLine>
                  <ThumbLine $size={2}>across all folds for model combination</ThumbLine>
                  <MiniSplit>
                    <MiniGrid>
                      <MiniRow><FoldPart /><FoldPart $red /></MiniRow>
                      <MiniRow><FoldPart /><FoldPart $red /></MiniRow>
                      <MiniRow><FoldPart /><FoldPart $red /></MiniRow>
                    </MiniGrid>
                    <MiniCol>
                      <MiniText>MLM₁ = ∑ MLM_XGB(X, θ; φ)</MiniText>
                      <MiniText>MLM₂ = MLM_SVM_1C(S)</MiniText>
                      <MiniText>MLM₃ = δ₁MLM₁ + δ₂MLM₂</MiniText>
                    </MiniCol>
                  </MiniSplit>
                </Thumb>
              </ThumbRow>
              <ThumbRow>
                <ThumbNumber>5</ThumbNumber>
                <Thumb $selected>
                  <ScaledSlide><SlideBody mini /></ScaledSlide>
                </Thumb>
              </ThumbRow>
              <ThumbRow>
                <ThumbNumber>6</ThumbNumber>
                <Thumb $top={1}>
                  <Pills>
                    <Pill $w={5} $c={BLUE} />
                    <Pill $w={3} $c="#fff" />
                    <Pill $w={3} $c="#fff" />
                  </Pills>
                  <ThumbLine>Nested workflow for assessing predictive performance of ML3 assuming</ThumbLine>
                  <ThumbLine>fixed features and hyper-parameters across MLM1 and MLM2</ThumbLine>
                  <Cells5>
                    <Cell5>F1</Cell5><Cell5>F2</Cell5><Cell5>F3</Cell5><Cell5>F4</Cell5><Cell5>F5</Cell5>
                  </Cells5>
                  <BottomBand>
                    <NavyBlock />
                    <RedNote>S1: inner folds, tune</RedNote>
                    <GreenBlock />
                  </BottomBand>
                </Thumb>
              </ThumbRow>
            </ThumbList>
            <Pointer><CursorIcon /></Pointer>
          </Panel>
          <Canvas>
            <Slide><SlideBody /></Slide>
          </Canvas>
        </Body>
      </Window>
    </Screen>
  </>
)

export default App
